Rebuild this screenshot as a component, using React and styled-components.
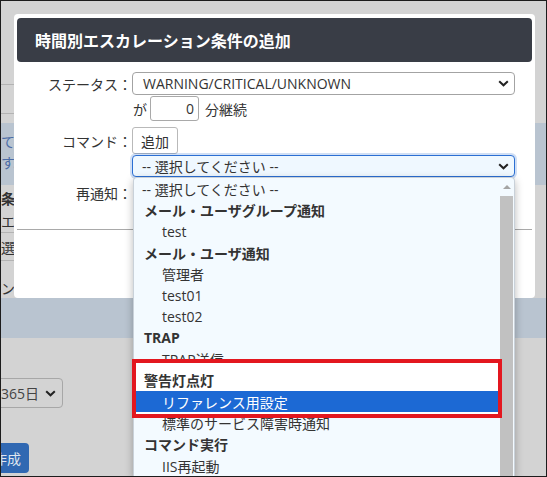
import React from 'react'
import styled, { createGlobalStyle } from 'styled-components'

const GlobalStyle = createGlobalStyle`
  html, body {
    margin: 0;
    padding: 0;
  }
  body {
    font-family: "Open Sans", "Noto Sans CJK JP", sans-serif;
    font-size: 14px;
    color: #333;
    background: #fff;
  }
  * {
    box-sizing: border-box;
  }
`

const Frame = styled.div`
  position: relative;
  width: 547px;
  height: 477px;
  border: 1px solid #1c1c1c;
  background: #d3d3d3;
  overflow: hidden;
`

/* ---- page behind the modal ---- */

const Page = styled.div`
  display: flex;
  flex-direction: column;
  color: #333;
`

const RuleBlock = styled.div`
  height: ${p => p.$h}px;
  width: 300px;
  border-bottom: 1px solid #b3b3b3;
`

const Band = styled.div`
  height: ${p => p.$h}px;
  margin-top: ${p => p.$mt || 0}px;
  padding-top: ${p => p.$pt || 0}px;
  background: #b9c4d0;
  color: #4b6ca6;
  line-height: 21px;
`

const BandText = styled.div`
  margin-left: ${p => p.$x}px;
  white-space: nowrap;
`

const TextRow = styled.div`
  height: ${p => p.$h}px;
  width: 300px;
  display: flex;
  align-items: ${p => p.$align || 'center'};
  padding-left: ${p => p.$x}px;
  font-weight: ${p => (p.$bold ? 700 : 400)};
  border-bottom: ${p => (p.$rule ? '1px solid #b3b3b3' : 'none')};
  white-space: nowrap;
`

const BackSelect = styled.div`
  margin: 40px 0 0 -30px;
  width: 92px;
  height: 30px;
  border: 1px solid #a7a7a7;
  border-radius: 4px;
  display: flex;
  align-items: center;
  justify-content: space-between;
  padding: 0 6px 0 29px;
  color: #444;
`

const BackButton = styled.div`
  align-self: flex-start;
  margin: 35px 0 0 -16px;
  height: 30px;
  padding: 0 8px;
  border-radius: 4px;
  background: #3068b2;
  color: #dfe6ef;
  display: flex;
  align-items: center;
  white-space: nowrap;
`

/* ---- modal ---- */

const Modal = styled.div`
  position: absolute;
  top: 13px;
  left: 13px;
  width: 521px;
  height: 284px;
  background: #fff;
  border-radius: 4px;
  display: flex;
  flex-direction: column;
`

const Header = styled.div`
  margin: 4px 3px 0;
  height: 44px;
  border-radius: 4px;
  background: #393d46;
  color: #fff;
  font-family: "Noto Sans CJK JP", sans-serif;
  font-size: 16px;
  font-weight: 700;
  display: flex;
  align-items: center;
  padding-left: 18px;
`

const Row = styled.div`
  display: flex;
  align-items: center;
  height: ${p => p.$h}px;
  margin-top: ${p => p.$mt}px;
`

const Label = styled.div`
  width: 118px;
  flex-shrink: 0;
  text-align: right;
  font-family: "Noto Sans CJK JP", sans-serif;
  white-space: nowrap;
`

const Select = styled.div`
  position: relative;
  width: 383px;
  height: 100%;
  display: flex;
  align-items: center;
  justify-content: space-between;
  padding: 0 5px 0 ${p => (p.$focus ? 9 : 10)}px;
  border: 1px solid ${p => (p.$focus ? '#2b6fd3' : '#a3a3a3')};
  border-radius: 4px;
  background: ${p => (p.$focus ? '#eff8ff' : '#fff')};
  box-shadow: ${p => (p.$focus ? '0 0 0 2px rgba(43, 111, 211, 0.22)' : 'none')};
  white-space: nowrap;
`

const Inline = styled.span`
  margin: 0 ${p => p.$mr || 0}px 0 ${p => p.$ml || 0}px;
  font-family: "Noto Sans CJK JP", sans-serif;
`

const NumInput = styled.div`
  width: 49px;
  height: 100%;
  border: 1px solid #a9a9a9;
  border-radius: 3px;
  display: flex;
  align-items: center;
  justify-content: flex-end;
  padding-right: 4px;
`

const Button = styled.div`
  width: 46px;
  height: 100%;
  border: 1px solid #b9b9b9;
  border-radius: 3px;
  background: #fff;
  display: flex;
  align-items: center;
  justify-content: center;
  font-family: "Noto Sans CJK JP", sans-serif;
`

const Footer = styled.div`
  margin: 26px 3px 0;
  border-top: 1px solid #a9a9a9;
`

/* ---- open dropdown list ---- */

const Popup = styled.div`
  position: absolute;
  top: calc(100% + 1px);
  left: 0;
  width: 382px;
  height: 300px;
  display: flex;
  background: #f3faff;
  border: 1px solid #c9d1d9;
  border-bottom: none;
  border-radius: 4px 4px 0 0;
  box-shadow: 0 3px 9px rgba(0, 0, 0, 0.28);
  z-index: 5;
`

const Options = styled.div`
  flex: 1;
  display: flex;
  flex-direction: column;
`

const Option = styled.div`
  height: 21.3px;
  flex-shrink: 0;
  display: flex;
  align-items: center;
  padding-left: ${p => (p.$group ? 10 : p.$pad || 28)}px;
  font-weight: ${p => (p.$group ? 700 : 400)};
  color: ${p => (p.$active ? '#fff' : '#333')};
  background: ${p => (p.$active ? '#1c69d4' : 'transparent')};
  white-space: nowrap;
`

const Marked = styled.div`
  position: relative;
  z-index: 1;
  display: flex;
  flex-direction: column;
  background: #fff;
  box-shadow: 0 -7px 0 #fff, 0 2px 0 #fff;

  &::after {
    content: '';
    position: absolute;
    top: -11px;
    bottom: -6px;
    left: -2px;
    right: -3px;
    border: 4px solid #e3171f;
    pointer-events: none;
  }
`

const Scroll = styled.div`
  width: 15px;
  display: flex;
  flex-direction: column;
  align-items: center;
`

const ScrollArrow = styled.div`
  height: 18px;
  display: flex;
  align-items: center;

  &::before {
    content: '';
    border-left: 4px solid transparent;
    border-right: 4px solid transparent;
    border-bottom: 4px solid #a4a4a4;
  }
`

const Thumb = styled.div`
  width: 13px;
  flex: 1;
  background: #c1c1c1;
`

const Chevron = () => (
  <svg width="11" height="7" viewBox="0 0 11 7">
    <path d="M1.2 1.2 L5.5 5.3 L9.8 1.2" fill="none" stroke="#222" strokeWidth="2" />
  </svg>
)

const options = [
  { text: '-- 選択してください --', pad: 8 },
  { text: 'メール・ユーザグループ通知', group: true },
  { text: 'test' },
  { text: 'メール・ユーザ通知', group: true },
  { text: '管理者' },
  { text: 'test01' },
  { text: 'test02' },
  { text: 'TRAP', group: true },
  { text: 'TRAP送信' },
]

const rest = [
  { text: '標準のサービス障害時通知' },
  { text: 'コマンド実行', group: true },
  { text: 'IIS再起動' },
]

const renderOption = o => (
  <Option key={o.text} $group={o.group} $pad={o.pad} $active={o.active}>
    {o.text}
  </Option>
)

export default function App() {
  return (
    <>
      <GlobalStyle />
      <Frame>
        <Page>
          <RuleBlock $h={84} />
          <RuleBlock $h={29} />
          <Band $h={62} $mt={9} $pt={8}>
            <BandText $x={0}>てい</BandText>
            <BandText $x={0}>す。</BandText>
          </Band>
          <TextRow $h={25} $x={-3} $bold>条件</TextRow>
          <TextRow $h={23} $x={0} $rule>エス</TextRow>
          <TextRow $h={28} $x={-4} $rule>選択</TextRow>
          <TextRow $h={37} $x={-3} $align="flex-end">ンタ</TextRow>
          <Band $h={40} />
          <BackSelect>
            <span>365日</span>
            <Chevron />
          </BackSelect>
          <BackButton>作成</BackButton>
        </Page>

        <Modal>
          <Header>時間別エスカレーション条件の追加</Header>
          <Row $h={23} $mt={10}>
            <Label>ステータス：</Label>
            <Select>
              <span>WARNING/CRITICAL/UNKNOWN</span>
              <Chevron />
            </Select>
          </Row>
          <Row $h={25} $mt={1}>
            <Label />
            <Inline $ml={1} $mr={3}>が</Inline>
            <NumInput>0</NumInput>
            <Inline $ml={6}>分継続</Inline>
          </Row>
          <Row $h={27} $mt={6}>
            <Label>コマンド：</Label>
            <Button>追加</Button>
          </Row>
          <Row $h={22} $mt={1}>
            <Label />
            <Select $focus>
              <span>-- 選択してください --</span>
              <Chevron />
              <Popup>
                <Options>
                  {options.map(renderOption)}
                  <Marked>
                    {renderOption({ text: '警告灯点灯', group: true })}
                    {renderOption({ text: 'リファレンス用設定', active: true })}
                  </Marked>
                  {rest.map(renderOption)}
                </Options>
                <Scroll>
                  <ScrollArrow />
                  <Thumb />
                </Scroll>
              </Popup>
            </Select>
          </Row>
          <Row $h={20} $mt={6}>
            <Label>再通知：</Label>
          </Row>
          <Footer />
        </Modal>
      </Frame>
    </>
  )
}
